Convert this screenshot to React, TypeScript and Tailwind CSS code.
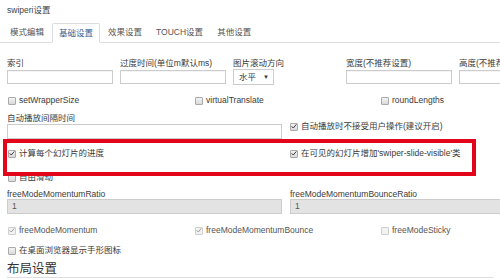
import type { ReactNode } from "react";

function Box({ checked = false, faded = false }: { checked?: boolean; faded?: boolean }) {
  return (
    <span
      className={`relative inline-flex h-[8px] w-[8px] shrink-0 items-center justify-center rounded-[1px] border ${
        faded ? "border-[#cfcfcf] bg-[#f2f2f2]" : "border-[#a9a9a9] bg-gradient-to-b from-[#f4f4f4] to-[#d8d8d8]"
      }`}
    >
      {checked && (
        <svg viewBox="0 0 8 8" className="h-[7px] w-[7px]">
          <path
            d="M1.2 4.2 L3 6 L6.8 1.6"
            fill="none"
            stroke={faded ? "#9a9a9a" : "#333"}
            strokeWidth="1.3"
            strokeLinecap="round"
            strokeLinejoin="round"
          />
        </svg>
      )}
    </span>
  );
}

function Check({
  label,
  checked,
  faded,
  className = "",
}: {
  label: ReactNode;
  checked?: boolean;
  faded?: boolean;
  className?: string;
}) {
  return (
    <div className={`flex h-[11px] shrink-0 items-center gap-[3px] whitespace-nowrap leading-[11px] ${className}`}>
      <Box checked={checked} faded={faded} />
      <span className={faded ? "text-[#555]" : ""}>{label}</span>
    </div>
  );
}

const TABS = ["模式编辑", "基础设置", "效果设置", "TOUCH设置", "其他设置"];

export default function App() {
  return (
    <div className="relative h-[278px] w-[500px] overflow-hidden bg-white font-['Liberation_Sans','Noto_Sans_CJK_SC',sans-serif] text-[8.5px] text-[#3a3a3a]">
      {/* title */}
      <div className="flex h-[20px] items-center pl-[7px] text-[#444]">swiperi设置</div>

      {/* tabs */}
      <div className="mt-[4px] flex h-[19px] items-end border-b border-[#ddd] pl-[4px]">
        {TABS.map((t, i) => (
          <div
            key={t}
            className={`mr-[2px] flex h-[19px] items-center px-[6px] ${
              i === 1
                ? "-mb-px h-[20px] rounded-t-[2px] border border-[#ddd] border-b-white bg-white px-[5px] text-[#35618f]"
                : "text-[#555]"
            }`}
          >
            {t}
          </div>
        ))}
      </div>

      {/* first field row */}
      <div className="mt-[15px] grid grid-cols-[106px_106px_106px_106px_106px] gap-x-[7px] pl-[7px]">
        {["索引", "过度时间(单位m默认ms)"].map((l) => (
          <div key={l} className="flex flex-col">
            <div className="h-[11px] whitespace-nowrap leading-[11px]">{l}</div>
            <div className="mt-[1px] h-[14px] border border-[#ccc] bg-white shadow-[inset_0_1px_1px_rgba(0,0,0,0.05)]" />
          </div>
        ))}
        <div className="flex flex-col">
          <div className="h-[11px] whitespace-nowrap leading-[11px]">图片滚动方向</div>
          <div className="flex h-[16px] w-[41px] items-center justify-between border border-[#ccc] bg-white pl-[5px] pr-[4px]">
            <span>水平</span>
            <span className="text-[6px]">▼</span>
          </div>
        </div>
        {["宽度(不推荐设置)", "高度(不推荐设置)"].map((l) => (
          <div key={l} className="flex flex-col">
            <div className="h-[11px] whitespace-nowrap leading-[11px]">{l}</div>
            <div className="mt-[1px] h-[14px] border border-[#ccc] bg-white shadow-[inset_0_1px_1px_rgba(0,0,0,0.05)]" />
          </div>
        ))}
      </div>

      {/* checkbox row */}
      <div className="mt-[10px] flex pl-[8px]">
        <Check className="w-[187px]" label="setWrapperSize" />
        <Check className="w-[186px]" label="virtualTranslate" />
        <Check label="roundLengths" />
      </div>

      {/* autoplay */}
      <div className="mt-[7px] flex pl-[7px]">
        <div className="flex w-[275px] shrink-0 flex-col">
          <div className="h-[11px] leading-[11px]">自动播放间隔时间</div>
          <div className="h-[15px] border border-[#ccc] bg-white" />
        </div>
        <div className="ml-[8px] pt-[8px]">
          <Check checked label="自动播放时不接受用户操作(建议开启)" />
        </div>
      </div>

      {/* progress / visible */}
      <div className="mt-[9px] flex pl-[8px]">
        <Check className="w-[282px]" checked label="计算每个幻灯片的进度" />
        <Check checked label="在可见的幻灯片增加'swiper-slide-visible'类" />
      </div>

      <Check className="mt-[13px] pl-[8px]" label="自由滑动" />

      {/* momentum ratios */}
      <div className="mt-[6px] flex pl-[7px]">
        <div className="flex w-[275px] shrink-0 flex-col">
          <div className="h-[10px] leading-[10px]">freeModeMomentumRatio</div>
          <div className="flex h-[15px] items-center border border-[#ccc] bg-[#e3e3e3] pl-[4px] text-[#555]">1</div>
        </div>
        <div className="ml-[8px] flex w-[260px] shrink-0 flex-col">
          <div className="h-[10px] whitespace-nowrap leading-[10px]">freeModeMomentumBounceRatio</div>
          <div className="flex h-[15px] items-center border border-[#ccc] bg-[#e3e3e3] pl-[4px] text-[#555]">1</div>
        </div>
      </div>

      <div className="mt-[11px] flex pl-[8px]">
        <Check className="w-[187px]" checked faded label="freeModeMomentum" />
        <Check className="w-[186px]" checked faded label="freeModeMomentumBounce" />
        <Check faded label="freeModeSticky" />
      </div>

      <Check className="mt-[9px] pl-[8px]" label="在桌面浏览器显示手形图标" />

      <div className="mx-[7px] mt-[5px] h-[17px] border-b border-[#ddd] text-[12.5px] leading-[16px] text-[#333]">
        布局设置
      </div>

      {/* annotation */}
      <div className="pointer-events-none absolute left-[3px] top-[139px] h-[37px] w-[473px] border-[4px] border-[#e3061b]" />
    </div>
  );
}
